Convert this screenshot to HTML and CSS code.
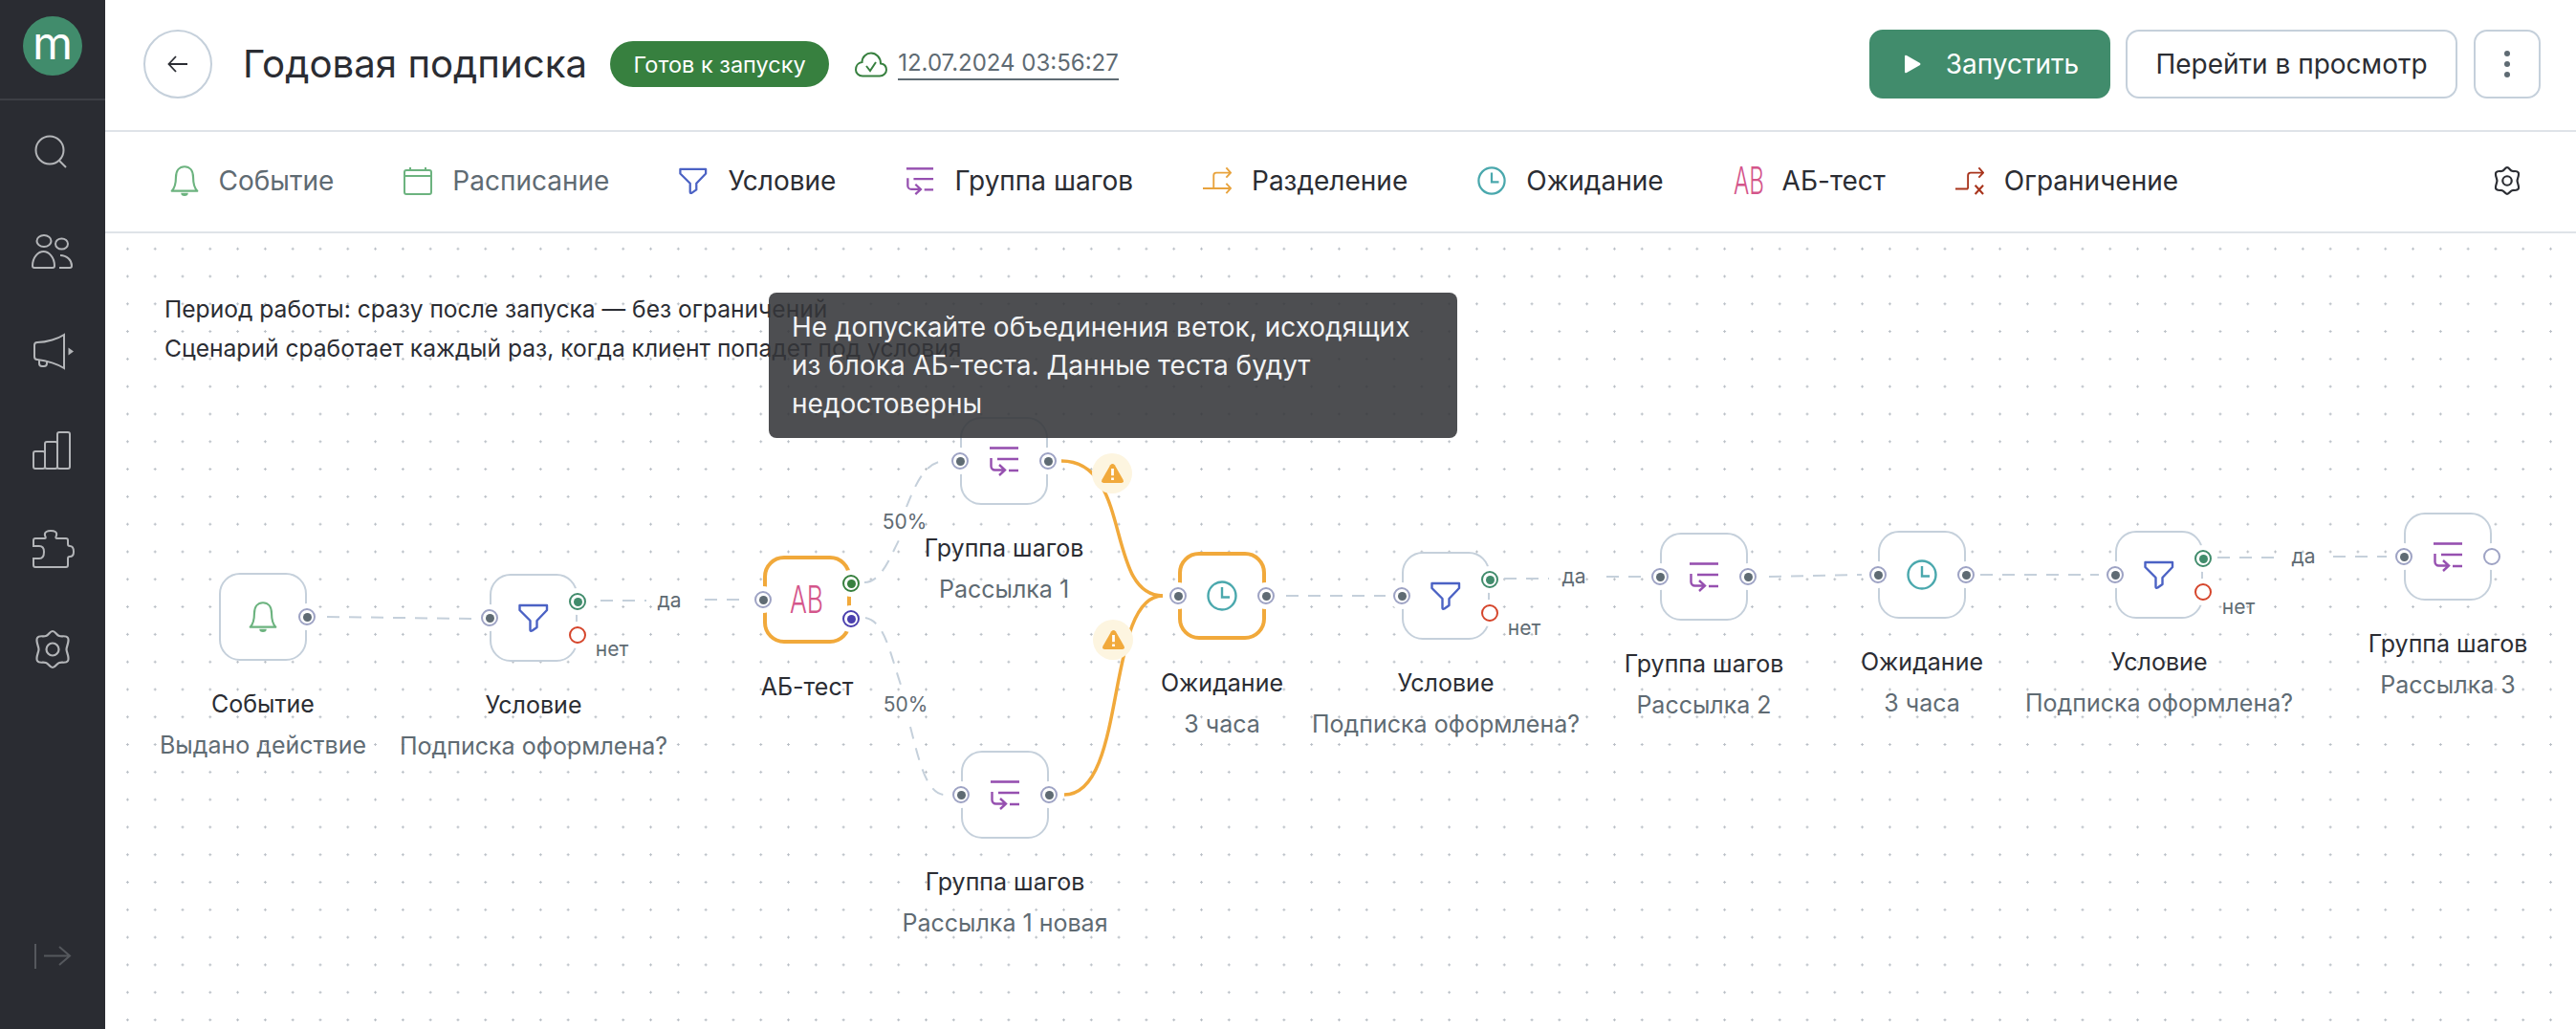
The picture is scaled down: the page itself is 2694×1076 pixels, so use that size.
FILE: index.html
```html
<!DOCTYPE html>
<html lang="ru">
<head>
<meta charset="utf-8">
<title>Годовая подписка</title>
<link rel="stylesheet" href="styles.css">
</head>
<body>
<svg class="defs" width="0" height="0" aria-hidden="true">
  <symbol id="i-bell" viewBox="0 0 28 30"><path d="M1.5 25 C4.5 22 5.5 18 5.5 12 C5.5 5 9 1.2 14 1.2 C19 1.2 22.5 5 22.5 12 C22.5 18 23.5 22 26.5 25 Z" fill="none" stroke="currentColor" stroke-width="2" stroke-linejoin="round"/><path d="M10.5 27 H17.5 A3.5 3 0 0 1 10.5 27 Z" fill="currentColor"/></symbol>
  <symbol id="i-cal" viewBox="0 0 30 30"><rect x="1" y="4" width="28" height="25" rx="2" fill="none" stroke="currentColor" stroke-width="2"/><path d="M1 10 H29 M7 1 V4 M23 1 V4" fill="none" stroke="currentColor" stroke-width="2"/></symbol>
  <symbol id="i-funnel" viewBox="0 0 32 30"><path d="M1.5 2 H30 V7 L19.5 18 V25 L14.5 28.5 Q12.5 29.5 12.5 27.5 V18 L1.5 7 Z" fill="none" stroke="currentColor" stroke-width="2.4" stroke-linejoin="round"/></symbol>
  <symbol id="i-group" viewBox="0 0 32 32"><path d="M1 2.5 H31" fill="none" stroke="currentColor" stroke-width="2.6"/><path d="M9 14 H31 M21 26 H31" fill="none" stroke="currentColor" stroke-width="2.4"/><path d="M2.5 13 V21.5 A4 4 0 0 0 6.5 25.5 H16 M11 20 L17 25.5 L11 31" fill="none" stroke="currentColor" stroke-width="2.4"/></symbol>
  <symbol id="i-split" viewBox="0 0 32 32"><path d="M0 24.5 H31 M26 19 L31 24.5 L26 30 M12 24.5 V10 A3 3 0 0 1 15 7 H31 M26 1.5 L31 7 L26 12.5" fill="none" stroke="currentColor" stroke-width="2"/></symbol>
  <symbol id="i-clock" viewBox="0 0 32 32"><circle cx="16" cy="16" r="14.5" fill="none" stroke="currentColor" stroke-width="2.4"/><path d="M16 7 V17.5 H24" fill="none" stroke="currentColor" stroke-width="2.4"/></symbol>
  <symbol id="i-limit" viewBox="0 0 32 32"><path d="M0 25 H14 M14 25 V10 A3 3 0 0 1 17 7 H31 M26 1.5 L31 7 L26 12.5" fill="none" stroke="currentColor" stroke-width="2"/><path d="M22 21 L31 31 M31 21 L22 31" fill="none" stroke="currentColor" stroke-width="2.2"/></symbol>
  <symbol id="i-gear" viewBox="0 0 44 44"><path d="M22 3 C25 3 26 7 29 8 C32 9 36 7 38 10 C40 13 36.5 19 36.5 22 C36.5 25 40 31 38 34 C36 37 32 35 29 36 C26 37 25 41 22 41 C19 41 18 37 15 36 C12 35 8 37 6 34 C4 31 7.5 25 7.5 22 C7.5 19 4 13 6 10 C8 7 12 9 15 8 C18 7 19 3 22 3 Z" fill="none" stroke="currentColor"/><circle cx="22" cy="22" r="6.5" fill="none" stroke="currentColor"/></symbol>
  <symbol id="i-warn" viewBox="0 0 26 24"><path d="M10.5 2.5 Q13 -0.5 15.5 2.5 L25 19 Q26.5 23 23 23 H3 Q-0.5 23 1 19 Z" fill="#f1a93b"/><path d="M13 6.5 V14.5 M13 17 V19.5" stroke="#fff" stroke-width="3"/></symbol>
</svg>

<div class="app">
  <aside class="sidebar">
    <div class="logo-wrap"><div class="logo"><span class="logo-m">m</span></div></div>
    <nav class="side-nav">
      <svg class="side-ico" viewBox="0 0 44 44"><circle cx="19" cy="20" r="14.5"/><path d="M29 31 L36 38"/></svg>
      <svg class="side-ico" viewBox="0 0 44 44"><ellipse cx="13" cy="11" rx="7.5" ry="6"/><path d="M3 39 A2 2 0 0 1 1 37 C1 28 7 22 12.5 22 C18 22 24 28 24 37 A2 2 0 0 1 22 39 Z"/><ellipse cx="31.5" cy="14" rx="6.5" ry="5.5"/><path d="M30 26 C37 26 42 31 42 37 A2 2 0 0 1 40 39 H29"/></svg>
      <svg class="side-ico" viewBox="0 0 44 44"><path d="M3 16 C3 14 4 13 6 13 C16 13 28 9 34 5 V40 C28 36 16 32 6 31 C4 31 3 30 3 28 Z"/><path d="M8 31 V35 A3 3 0 0 0 11 38 H13 A3 3 0 0 0 16 35 V32"/><path class="solid" d="M38.500 18.500 L44 22.500 L38.500 26.500 Z"/></svg>
      <svg class="side-ico" viewBox="0 0 44 44"><rect x="2" y="23" width="12" height="18" rx="2"/><rect x="14" y="13" width="13" height="28" rx="2"/><rect x="27" y="3" width="13" height="38" rx="2"/></svg>
      <svg class="side-ico" viewBox="0 0 44 44"><path d="M2 12 A2 2 0 0 1 4 10 H14 C15 10 15 9 14 7 C13 3 17 2 20 2 C24 2 27 3 26 7 C25 9 25 10 27 10 H36 A2 2 0 0 1 38 12 V16 C38 17 39 18 40 18 C43 18 44 21 44 24 C44 27 43 29 40 29 C39 29 38 29 38 31 V38 A2 2 0 0 1 36 40 H4 A2 2 0 0 1 2 38 V31 H8 C12 31 13 28 13 24 C13 20 11 18 8 18 H2 Z"/></svg>
      <svg class="side-ico gear-side"><use href="#i-gear"/></svg>
    </nav>
    <svg class="side-collapse" viewBox="0 0 44 32"><path d="M4 3 V29 M13 15.500 H40 M29 6 L40 15.500 L29 25"/></svg>
  </aside>

  <main class="main">
    <header class="topbar">
      <button class="back-btn" type="button"><svg class="back-ico" viewBox="0 0 22 18"><path d="M21 9 H1.500 M9 1 L1.500 9 L9 17"/></svg></button>
      <h1 class="title">Годовая подписка</h1>
      <span class="badge">Готов к запуску</span>
      <svg class="cloud" viewBox="0 0 34 27"><path d="M8 25.500 H26 C30 25.500 33 22.500 33 19 C33 15.500 30.500 13 27 12.500 C27 6 22 1.500 17 1.500 C12 1.500 7.500 5.500 7.500 11 C3.500 11.500 1 15 1 19 C1 22.500 4 25.500 8 25.500 Z"/><path d="M12 15 L16 20 L22 11"/></svg>
      <span class="saved">12.07.2024 03:56:27</span>
      <div class="actions">
        <button class="btn btn-run" type="button"><svg class="play" viewBox="0 0 18 20"><path d="M1 2 Q1 0 3 1 L17 9 Q18 10 17 11 L3 19 Q1 20 1 18 Z"/></svg>Запустить</button>
        <button class="btn btn-view" type="button">Перейти в просмотр</button>
        <button class="btn btn-more" type="button"><span class="dot"></span><span class="dot"></span><span class="dot"></span></button>
      </div>
    </header>

    <div class="toolbar">
      <span class="tool muted"><svg class="tool-ico c-green"><use href="#i-bell"/></svg>Событие</span>
      <span class="tool muted"><svg class="tool-ico c-green"><use href="#i-cal"/></svg>Расписание</span>
      <span class="tool"><svg class="tool-ico c-blue"><use href="#i-funnel"/></svg>Условие</span>
      <span class="tool"><svg class="tool-ico c-purple"><use href="#i-group"/></svg>Группа шагов</span>
      <span class="tool"><svg class="tool-ico c-orange"><use href="#i-split"/></svg>Разделение</span>
      <span class="tool"><svg class="tool-ico c-teal"><use href="#i-clock"/></svg>Ожидание</span>
      <span class="tool"><span class="ab c-pink">AB</span>АБ-тест</span>
      <span class="tool"><svg class="tool-ico c-red"><use href="#i-limit"/></svg>Ограничение</span>
      <svg class="tool-gear"><use href="#i-gear"/></svg>
    </div>

    <section class="canvas">
      <div class="info">Период работы: сразу после запуска — без ограничений<br>Сценарий сработает каждый раз, когда клиент попадет под условия</div>

      <svg class="edges" viewBox="110 244 2584 832" width="2584" height="832">
        <g class="dash">
          <path d="M342 645 L494 647"/>
          <path d="M628 628 H676 M737 627 H779"/>
          <path d="M904 609 C922 609 932 580 940 565 M948 530 C958 505 968 482 989 482"/>
          <path d="M905 646 C925 650 930 680 942 716 M952 760 C960 790 968 831 988 831"/>
          <path d="M1345 623 H1449"/>
          <path d="M1573 605 H1620 M1680 603 H1720"/>
          <path d="M1850 603 L1947 601"/>
          <path d="M2071 601 H2195"/>
          <path d="M2319 583 H2378 M2440 582 H2496"/>
        </g>
        <g class="warn-edge">
          <path d="M1110 482 C1185 482 1155 623 1216 623"/>
          <path d="M1113 831 C1180 831 1155 623 1216 623"/>
        </g>
      </svg>

      <div class="node n-event"><div class="box"><svg class="node-ico c-green"><use href="#i-bell"/></svg><span class="port right"></span></div><div class="name">Событие</div><div class="sub">Выдано действие</div></div>
      <div class="node n-cond1"><div class="box"><svg class="node-ico c-blue"><use href="#i-funnel"/></svg><span class="port left"></span><span class="port right yes"></span><span class="port right no"></span></div><div class="name">Условие</div><div class="sub">Подписка оформлена?</div></div>
      <div class="node n-ab"><div class="box hot"><span class="ab ab-large c-pink">AB</span><span class="port left"></span><span class="port right a"></span><span class="port right b"></span></div><div class="name">АБ-тест</div></div>
      <div class="node n-g1"><div class="box"><svg class="node-ico c-purple"><use href="#i-group"/></svg><span class="port left"></span><span class="port right"></span></div><div class="name">Группа шагов</div><div class="sub">Рассылка 1</div></div>
      <div class="node n-g1b"><div class="box"><svg class="node-ico c-purple"><use href="#i-group"/></svg><span class="port left"></span><span class="port right"></span></div><div class="name">Группа шагов</div><div class="sub">Рассылка 1 новая</div></div>
      <div class="node n-w1"><div class="box hot"><svg class="node-ico c-teal"><use href="#i-clock"/></svg><span class="port left"></span><span class="port right"></span></div><div class="name">Ожидание</div><div class="sub">3 часа</div></div>
      <div class="node n-cond2"><div class="box"><svg class="node-ico c-blue"><use href="#i-funnel"/></svg><span class="port left"></span><span class="port right yes"></span><span class="port right no"></span></div><div class="name">Условие</div><div class="sub">Подписка оформлена?</div></div>
      <div class="node n-g2"><div class="box"><svg class="node-ico c-purple"><use href="#i-group"/></svg><span class="port left"></span><span class="port right"></span></div><div class="name">Группа шагов</div><div class="sub">Рассылка 2</div></div>
      <div class="node n-w2"><div class="box"><svg class="node-ico c-teal"><use href="#i-clock"/></svg><span class="port left"></span><span class="port right"></span></div><div class="name">Ожидание</div><div class="sub">3 часа</div></div>
      <div class="node n-cond3"><div class="box"><svg class="node-ico c-blue"><use href="#i-funnel"/></svg><span class="port left"></span><span class="port right yes"></span><span class="port right no"></span></div><div class="name">Условие</div><div class="sub">Подписка оформлена?</div></div>
      <div class="node n-g3"><div class="box"><svg class="node-ico c-purple"><use href="#i-group"/></svg><span class="port left"></span><span class="port right empty"></span></div><div class="name">Группа шагов</div><div class="sub">Рассылка 3</div></div>

      <span class="edge-label l-da1">да</span>
      <span class="edge-label l-net1">нет</span>
      <span class="edge-label l-p1">50%</span>
      <span class="edge-label l-p2">50%</span>
      <span class="edge-label l-da2">да</span>
      <span class="edge-label l-net2">нет</span>
      <span class="edge-label l-da3">да</span>
      <span class="edge-label l-net3">нет</span>

      <span class="warn w-a"><svg class="warn-ico"><use href="#i-warn"/></svg></span>
      <span class="warn w-b"><svg class="warn-ico"><use href="#i-warn"/></svg></span>

      <div class="tooltip">Не допускайте объединения веток, исходящих из блока АБ-теста. Данные теста будут недостоверны</div>
    </section>
  </main>
</div>
</body>
</html>
```

FILE: styles.css
```css
* { box-sizing: border-box; }
html, body { margin: 0; height: 100%; overflow: hidden; }
body { font-family: Inter, "Noto Sans", sans-serif; color: #2b2d33; background: #fff; }
button { font: inherit; color: inherit; background: none; cursor: pointer; }
.defs { position: absolute; }

.app { display: flex; height: 1076px; }

/* Sidebar */
.sidebar { width: 110px; flex: none; background: #2a2c32; display: flex; flex-direction: column; align-items: center; padding-bottom: 60px; }
.logo-wrap { width: 100%; height: 105px; padding-top: 17px; border-bottom: 2px solid #3d3f45; display: flex; justify-content: center; }
.logo { width: 62px; height: 62px; border-radius: 50%; background: #418c6c; display: flex; align-items: center; justify-content: center; padding-bottom: 6px; }
.logo-m { color: #fff; font-size: 48px; font-weight: 400; line-height: 52px; }
.side-nav { display: flex; flex-direction: column; align-items: center; gap: 60px; padding-top: 32px; }
.side-ico { width: 44px; height: 44px; fill: none; stroke: #b3b5b8; stroke-width: 2; overflow: visible; }
.side-ico .solid { fill: #b3b5b8; stroke: none; }
.gear-side { stroke-width: 2.2; color: #b3b5b8; }
.side-collapse { margin-top: auto; width: 44px; height: 32px; fill: none; stroke: #55585d; stroke-width: 2; }

/* Main */
.main { flex: 1; min-width: 0; display: flex; flex-direction: column; }

.topbar { height: 138px; flex: none; border-bottom: 2px solid #dfe3e8; display: flex; align-items: center; padding: 0 37px 2px 40px; }
.back-btn { width: 72px; height: 72px; border-radius: 50%; border: 2px solid #c5d0db; padding: 0; display: flex; align-items: center; justify-content: center; }
.back-ico { width: 22px; height: 18px; fill: none; stroke: #2b2d33; stroke-width: 1.800; }
.title { margin: 0 0 0 32px; font-size: 40.200px; font-weight: 400; line-height: 48px; white-space: nowrap; }
.badge { margin-left: 24px; height: 48px; padding: 0 24.500px; border-radius: 24px; background: #37803f; color: #fff; font-size: 23.500px; display: flex; align-items: center; white-space: nowrap; }
.cloud { margin-left: 27px; width: 34px; height: 27px; fill: none; stroke: #37803f; stroke-width: 2; }
.saved { margin-left: 11px; font-size: 24px; line-height: 32px; color: #5f6b73; border-bottom: 2px solid #5f6b73; white-space: nowrap; }
.actions { margin-left: auto; display: flex; gap: 16px; }
.btn { height: 72px; border-radius: 14px; border: 2px solid #c5d0db; font-size: 28px; display: flex; align-items: center; justify-content: center; padding: 0; white-space: nowrap; }
.btn-run { width: 252px; padding-left: 3px; background: #418c6c; border-color: #418c6c; color: #fff; gap: 26px; }
.play { width: 18px; height: 20px; fill: #fff; }
.btn-view { width: 347px; }
.btn-more { width: 70px; margin-left: 1px; flex-direction: column; gap: 5px; }
.dot { width: 6px; height: 6px; border-radius: 50%; background: #5f6b73; }

.toolbar { height: 106px; flex: none; border-bottom: 2px solid #dfe3e8; display: flex; align-items: center; gap: 73px; padding: 0 56px 3px 67.500px; }
.tool { display: flex; align-items: center; gap: 21px; font-size: 28px; white-space: nowrap; color: #2b2d33; }
.tool.muted { color: #5f6b73; }
.tool-ico { width: 30px; height: 32px; }
.tool-gear { margin-left: auto; width: 32px; height: 32px; color: #2b2d33; stroke-width: 3; }
.c-green { color: #6cb37f; }
.c-blue { color: #4b62c4; }
.c-purple { color: #9650b0; }
.c-orange { color: #e8a33d; }
.c-teal { color: #4aa8ad; }
.c-pink { color: #d4568b; }
.c-red { color: #a8341c; }
.ab { display: inline-block; width: 30px; font-size: 39px; font-weight: 300; line-height: 32px; white-space: nowrap; transform: scaleX(.62); transform-origin: left center; }
.ab-large { width: 36px; transform: scaleX(.68); }

/* Canvas */
.canvas { position: relative; flex: 1; overflow: hidden; background-color: #fff; background-image: radial-gradient(circle, #b8bec5 1px, transparent 1.400px); background-size: 28.800px 28.800px; background-position: 9px 1.800px; }
.edges { position: absolute; left: 0; top: 0; }
.dash path { fill: none; stroke: #c5d0db; stroke-width: 2; stroke-dasharray: 13 10; }
.warn-edge path { fill: none; stroke: #f1a93b; stroke-width: 3.500; }

.info { position: absolute; left: 62px; top: 59px; font-size: 24.600px; line-height: 41px; white-space: nowrap; }

.node { position: absolute; width: 92px; display: flex; flex-direction: column; align-items: center; }
.box { position: relative; width: 92px; height: 92px; flex: none; background: #fff; border: 2px solid #c5d0db; border-radius: 22px; display: flex; align-items: center; justify-content: center; }
.box.hot { border: 4px solid #f1a93b; }
.node-ico { width: 32px; height: 32px; }
.name { margin-top: 23px; font-size: 25px; line-height: 44px; white-space: nowrap; }
.sub { font-size: 25px; line-height: 43px; color: #5f6b73; white-space: nowrap; }

.port { position: absolute; top: 50%; width: 18px; height: 18px; margin-top: -9px; border-radius: 50%; background: #fff; border: 2px solid #9ea3c4; box-shadow: 0 0 0 5px #fff; display: flex; align-items: center; justify-content: center; }
.port::after { content: ""; width: 9px; height: 9px; border-radius: 50%; background: #5f6b73; }
.port.left { left: -11px; }
.port.right { right: -11px; }
.box.hot .port.left { left: -13px; }
.box.hot .port.right { right: -13px; }
.port.yes { margin-top: -26px; border-color: #418c6c; }
.port.yes::after { background: #418c6c; }
.port.no { margin-top: 9px; border-color: #d5452b; }
.port.no::after, .port.empty::after { display: none; }
.port.a { margin-top: -26px; border-color: #37803f; }
.port.a::after { background: #37803f; }
.port.b { margin-top: 11px; border-color: #4a3fae; }
.port.b::after { background: #4a3fae; }

.n-event { left: 119px; top: 355px; }
.n-cond1 { left: 402px; top: 356px; }
.n-ab { left: 688px; top: 337px; }
.n-g1 { left: 894px; top: 192px; }
.n-g1b { left: 895px; top: 541px; }
.n-w1 { left: 1122px; top: 333px; }
.n-cond2 { left: 1356px; top: 333px; }
.n-g2 { left: 1626px; top: 313px; }
.n-w2 { left: 1854px; top: 311px; }
.n-cond3 { left: 2102px; top: 311px; }
.n-g3 { left: 2404px; top: 292px; }

.edge-label { position: absolute; transform: translate(-50%, -50%); font-size: 21px; line-height: 26px; color: #5f6b73; white-space: nowrap; }
.l-da1 { left: 590px; top: 384px; }
.l-net1 { left: 530px; top: 435px; }
.l-p1 { left: 836px; top: 302px; }
.l-p2 { left: 837px; top: 493px; }
.l-da2 { left: 1536px; top: 359px; }
.l-net2 { left: 1484px; top: 413px; }
.l-da3 { left: 2299px; top: 338px; }
.l-net3 { left: 2231px; top: 391px; }

.warn { position: absolute; width: 42px; height: 42px; border-radius: 50%; background: #fdf5e0; display: flex; align-items: center; justify-content: center; transform: translate(-50%, -50%); }
.warn-ico { width: 25px; height: 22px; }
.w-a { left: 1053px; top: 251px; }
.w-b { left: 1054px; top: 425px; }

.tooltip { position: absolute; left: 694px; top: 62px; width: 720px; height: 152px; padding: 16px 24px; border-radius: 8px; background: rgba(52, 54, 57, .88); color: #f2f3f4; font-size: 28px; line-height: 40px; }
```
